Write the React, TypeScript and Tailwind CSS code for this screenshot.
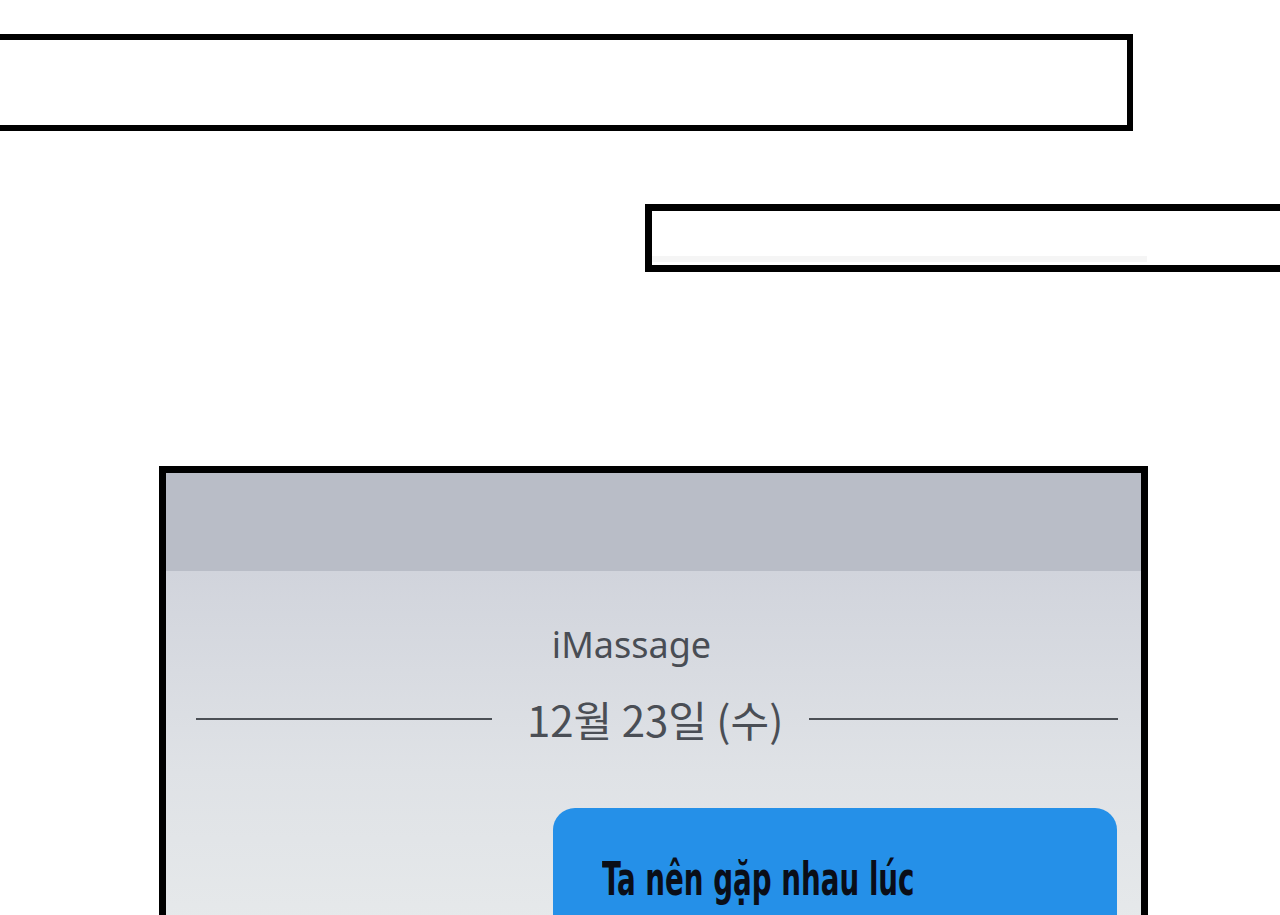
export default function App() {
  return (
    <div className="relative h-[915px] w-[1280px] overflow-hidden bg-white">
      {/* top caption box, runs off the left edge */}
      <div className="ml-[-12px] mt-[34px] h-[97px] w-[1145px] border-[6px] border-black bg-white" />

      {/* second caption box, runs off the right edge */}
      <div className="ml-[645px] mt-[73px] h-[68px] w-[660px] border-[7px] border-black bg-white">
        <div className="mt-[45px] h-[6px] w-[495px] bg-[#f5f5f5]" />
      </div>

      {/* phone panel */}
      <div className="ml-[159px] mt-[194px] w-[989px] border-[7px] border-b-0 border-black">
        <div className="h-[98px] bg-[#b9bdc7]" />
        <div className="h-[400px] bg-gradient-to-b from-[#d1d4dc] via-[#dfe2e6] to-[#e8ebec] pt-[56px]">
          <div className="mr-[44px] text-center font-['Noto_Sans',sans-serif] text-[36px] leading-none text-[#494d54]">
            iMassage
          </div>
          <div className="mt-[35px] flex items-center pl-[30px] pr-[23px]">
            <div className="h-[2px] w-[296px] bg-[#4b4f55]" />
            <div className="ml-[35px] mr-[26px] font-['Noto_Sans_CJK_KR',sans-serif] text-[42px] leading-none text-[#4a4e55]">
              12월 23일 (수)
            </div>
            <div className="h-[2px] flex-1 bg-[#4b4f55]" />
          </div>
          <div className="ml-[387px] mt-[68px] h-[140px] w-[564px] rounded-[22px] bg-[#2590e8] pl-[49px] pt-[48px]">
            <div className="origin-left scale-x-[0.67] whitespace-nowrap font-['DejaVu_Sans_Condensed',sans-serif] text-[46px] font-bold leading-none text-[#0a0e18]">
              Ta nên gặp nhau lúc
            </div>
          </div>
        </div>
      </div>
    </div>
  )
}
